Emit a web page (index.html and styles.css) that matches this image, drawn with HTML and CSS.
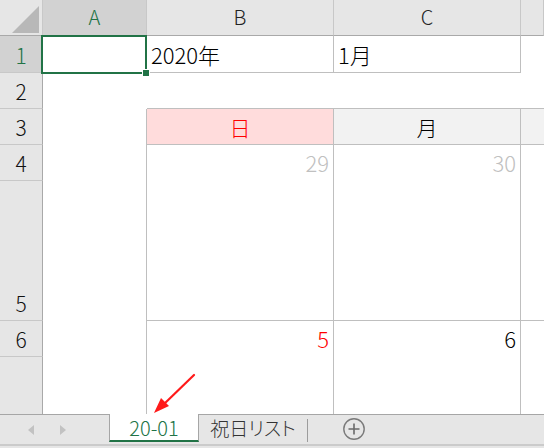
FILE: index.html
```html
<!DOCTYPE html>
<html lang="ja">
<head>
<meta charset="utf-8">
<link rel="stylesheet" href="styles.css">
</head>
<body>
<div class="app">
  <div class="sheet">
    <div class="corner"><svg class="tri" width="42" height="35" viewBox="0 0 42 35"><polygon points="12,33 39,33 39,6" fill="#b8b8b8"/></svg></div>
    <div class="ch sel">A</div>
    <div class="ch">B</div>
    <div class="ch">C</div>
    <div class="ch"></div>

    <div class="rh sel">1</div>
    <div class="c"></div>
    <div class="c bb br tl">2020年</div>
    <div class="c bb br tl">1月</div>
    <div class="c"></div>

    <div class="rh">2</div>
    <div class="c"></div>
    <div class="c bb"></div>
    <div class="c bb"></div>
    <div class="c bb"></div>

    <div class="rh">3</div>
    <div class="c br"></div>
    <div class="c br bb sun day">日</div>
    <div class="c br bb wk day">月</div>
    <div class="c bb wk"></div>

    <div class="rh">4</div>
    <div class="c br span2"></div>
    <div class="c br bb span2 num grey">29</div>
    <div class="c br bb span2 num grey">30</div>
    <div class="c bb span2"></div>
    <div class="rh tall">5</div>

    <div class="rh">6</div>
    <div class="c br"></div>
    <div class="c br num red">5</div>
    <div class="c br num">6</div>
    <div class="c"></div>

    <div class="rh last"></div>
    <div class="c br"></div>
    <div class="c br"></div>
    <div class="c br"></div>
    <div class="c"></div>

    <div class="selection"><div class="handle"></div></div>
    <svg class="arrow" width="60" height="60" viewBox="0 0 60 60">
      <line x1="53" y1="5" x2="22" y2="35" stroke="#ff1a1a" stroke-width="2.2" stroke-linecap="round"/>
      <polygon points="13,43 20,28 28,36" fill="#ff1a1a"/>
    </svg>
  </div>

  <div class="tabbar">
    <div class="nav">
      <svg width="109" height="28" viewBox="0 0 109 28"><polygon points="28,15 34,10 34,20" fill="#c2c2c2"/><polygon points="60,10 66,15 60,20" fill="#c2c2c2"/></svg>
    </div>
    <div class="tab active">20-01</div>
    <div class="tab other">祝日リスト</div>
    <div class="sep"></div>
    <div class="add">
      <svg width="24" height="24" viewBox="0 0 24 24"><circle cx="12" cy="12" r="10.2" fill="none" stroke="#7a7a7a" stroke-width="1.4"/><path d="M12 6.5V17.5M6.5 12H17.5" stroke="#6a6a6a" stroke-width="1.6"/></svg>
    </div>
    <div class="fill"></div>
  </div>
  <div class="bottomline"></div>
</div>
</body>
</html>
```

FILE: styles.css
```css
html, body {
  margin: 0;
  padding: 0;
  background: #ffffff;
}
.app {
  width: 544px;
  height: 448px;
  overflow: hidden;
  font-family: "Noto Sans CJK JP", "Noto Sans", sans-serif;
  font-weight: 300;
  background: #e6e6e6;
}
.sheet {
  position: relative;
  display: grid;
  grid-template-columns: 43px 104px 187px 187px 23px;
  grid-template-rows: 36px 37px 36px 36px 36px 140px 36px 57px;
  background: #ffffff;
}
.sheet > div { box-sizing: border-box; }
.corner {
  background: #e6e6e6;
  border-bottom: 1px solid #a9a9a9;
  border-right: 1px solid #c8c8c8;
}
.tri { display: block; }
.ch {
  background: #e6e6e6;
  border-bottom: 1px solid #a9a9a9;
  border-right: 1px solid #c8c8c8;
  display: flex;
  align-items: center;
  justify-content: center;
  font-size: 20px;
  line-height: 20px;
  color: #222222;
  padding-bottom: 1px;
}
.ch.sel {
  background: #d2d2d2;
  color: #217346;
}
.rh {
  background: #e6e6e6;
  border-right: 1px solid #a9a9a9;
  border-bottom: 1px solid #c8c8c8;
  display: flex;
  align-items: flex-end;
  justify-content: center;
  font-size: 21px;
  line-height: 20px;
  color: #111111;
  padding-bottom: 7px;
}
.rh.sel {
  background: #d2d2d2;
  color: #217346;
}
.rh.last { border-bottom: none; }
.c {
  background: #ffffff;
  font-size: 22px;
  line-height: 22px;
  color: #000000;
}
.bb { border-bottom: 1px solid #bfbfbf; }
.br { border-right: 1px solid #bfbfbf; }
.span2 { grid-row: span 2; }
.tl {
  display: flex;
  align-items: flex-end;
  padding: 0 0 7px 4px;
}
.day {
  display: flex;
  align-items: center;
  justify-content: center;
  font-size: 21px;
}
.sun { background: #ffdcdc; color: #ff0000; }
.wk { background: #f2f2f2; }
.num {
  text-align: right;
  padding: 6px 4px 0 0;
}
.grey { color: #c0c0c0; }
.red { color: #ff0000; }
.selection {
  position: absolute;
  left: 41px;
  top: 35px;
  width: 106px;
  height: 39px;
  border: 2px solid #217346;
  box-sizing: border-box;
}
.handle {
  position: absolute;
  right: -5px;
  bottom: -5px;
  width: 6px;
  height: 6px;
  background: #217346;
  border: 1px solid #ffffff;
}
.arrow {
  position: absolute;
  left: 141px;
  top: 370px;
}
.tabbar {
  display: flex;
  height: 30px;
  align-items: stretch;
  background: #e6e6e6;
}
.nav {
  width: 109px;
  height: 28px;
  border-top: 1px solid #a6a6a6;
  box-sizing: border-box;
}
.nav svg { display: block; }
.tab {
  box-sizing: border-box;
  height: 28px;
  display: flex;
  align-items: center;
  justify-content: center;
  font-size: 19px;
  line-height: 20px;
}
.active {
  width: 90px;
  background: #ffffff;
  color: #217346;
  border-left: 1px solid #a6a6a6;
  border-right: 1px solid #a6a6a6;
  border-bottom: 2px solid #217346;
  font-size: 20px;
  padding-top: 1px;
}
.other {
  width: 108px;
  color: #333333;
  border-top: 1px solid #a6a6a6;
  font-feature-settings: "palt";
  padding-bottom: 2px;
}
.sep {
  width: 1px;
  height: 30px;
  border-top: 1px solid #a6a6a6;
  box-sizing: border-box;
  background: linear-gradient(#e6e6e6 4px, #9c9c9c 4px, #9c9c9c 27px, #e6e6e6 27px);
}
.add {
  width: 92px;
  border-top: 1px solid #a6a6a6;
  box-sizing: border-box;
  display: flex;
  align-items: center;
  justify-content: center;
  padding-bottom: 1px;
}
.add svg { display: block; }
.fill {
  flex: 1;
  border-top: 1px solid #a6a6a6;
}
.bottomline {
  height: 2px;
  background: #cbcbcb;
}
```
